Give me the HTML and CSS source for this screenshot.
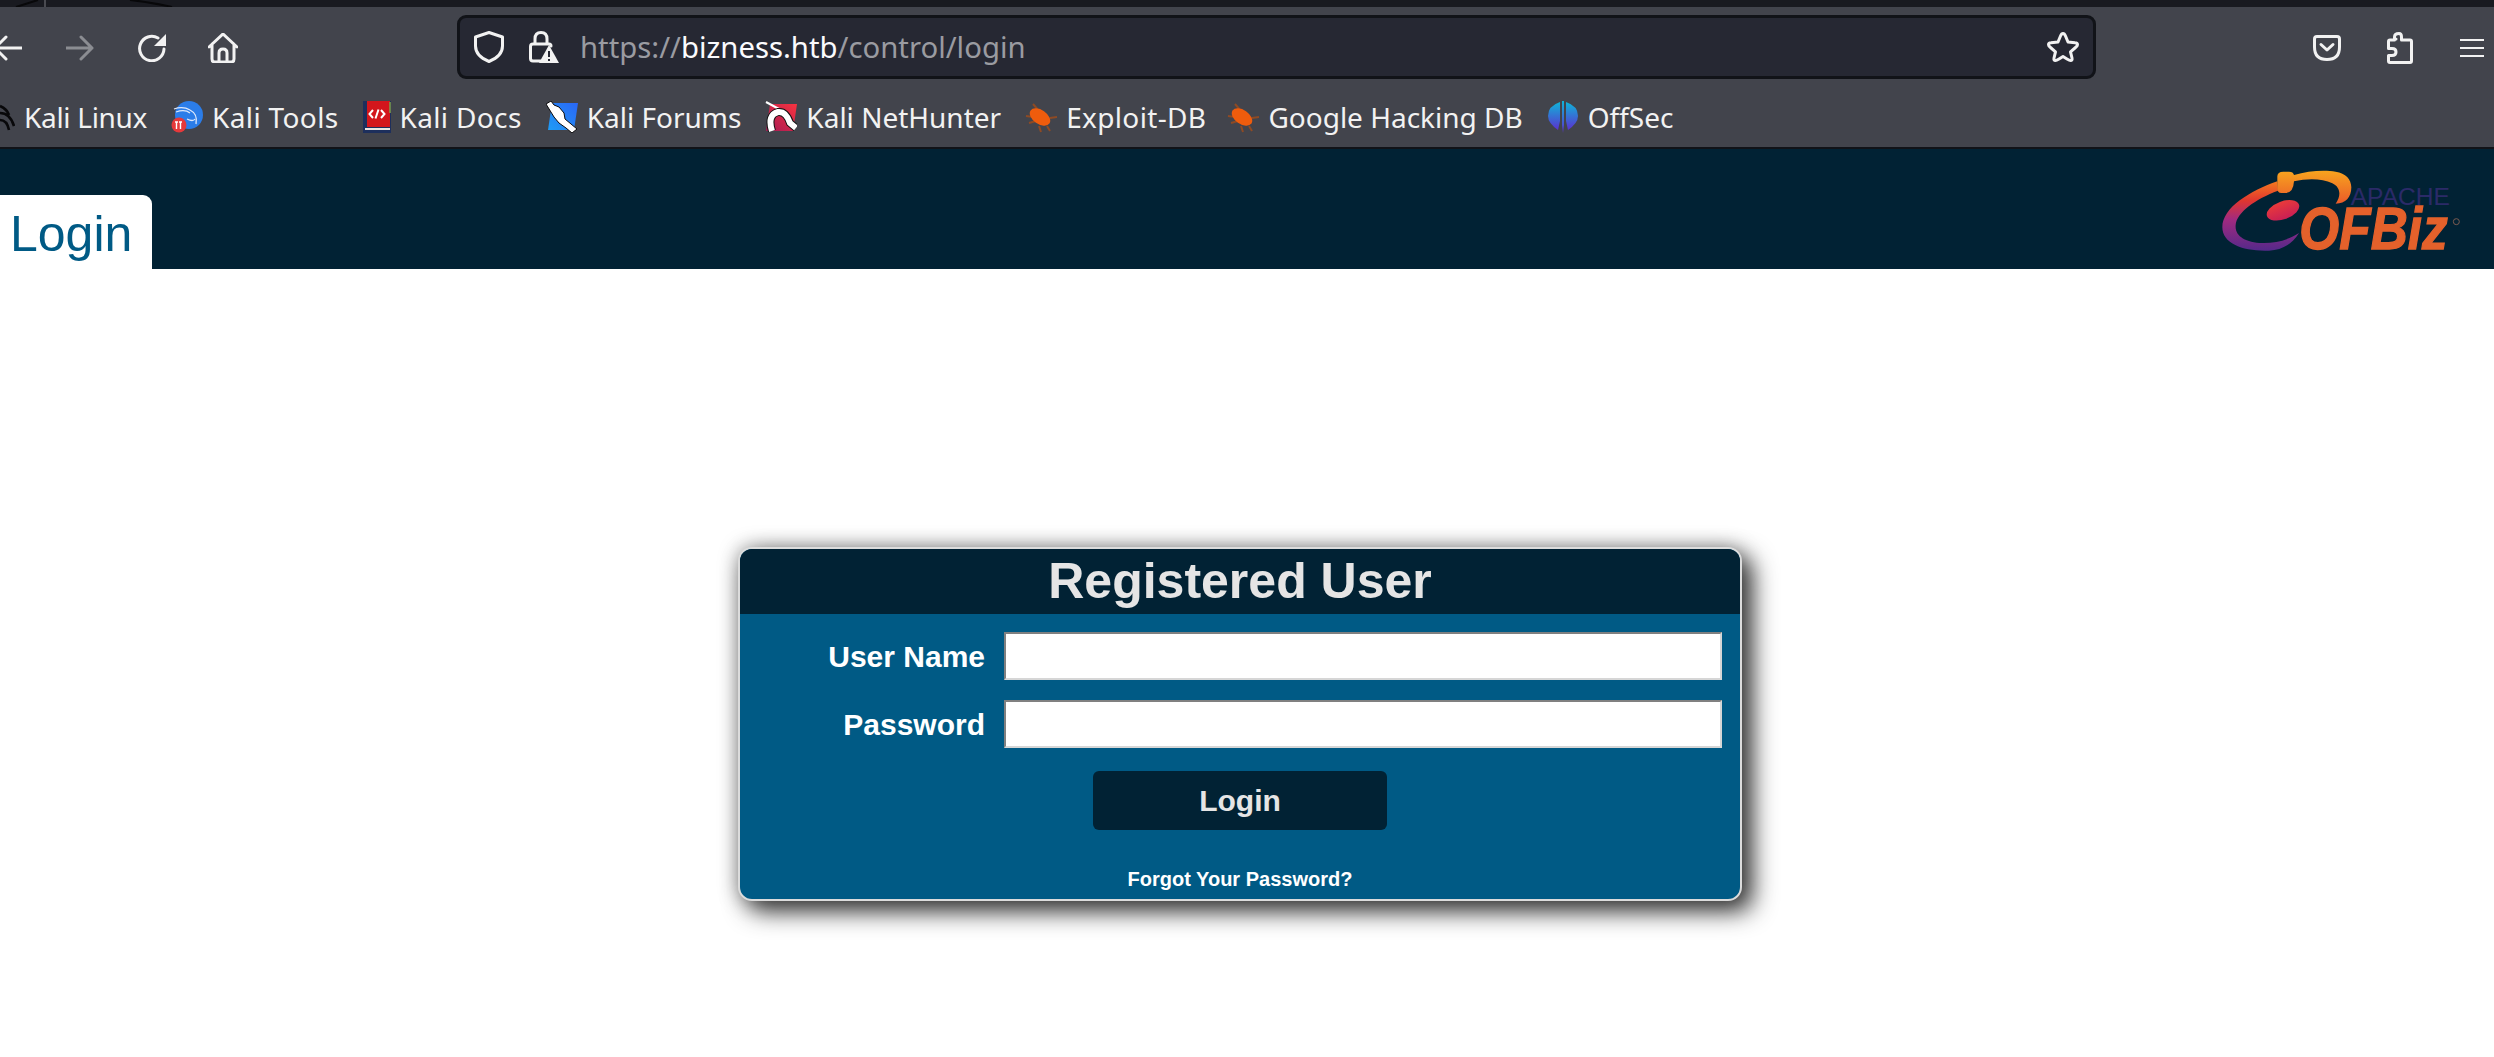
FILE: index.html
```html
<!DOCTYPE html>
<html lang="en">
<head>
<meta charset="utf-8">
<title>OFBiz: Login</title>
<link rel="stylesheet" href="styles.css">
</head>
<body>
<div class="desktop-strip">
  <svg class="strip-art" width="300" height="7" viewBox="0 0 300 7"><path d="M45 0V7" stroke="#5a5b60" stroke-width="1.500"/><path d="M16 7L38 0M130 0Q150 2 172 7" stroke="#08080a" stroke-width="2" fill="none"/></svg>
</div>
<header class="chrome">
  <div class="toolbar">
    <svg class="ic ic-back" width="22" height="30" viewBox="8 0 22 30"><path d="M32 15H3M14 4L3 15L14 26" class="st"/></svg>
    <svg class="ic ic-fwd" width="28" height="30" viewBox="0 0 28 30"><path d="M0 15H26M15 4L26 15L15 26" class="st dim"/></svg>
    <svg class="ic ic-reload" width="28" height="28" viewBox="0 0 28 28"><path d="M26 15A12.200 12.200 0 1 1 20 4" class="st"/><path d="M28 0V12H16Z" fill="#f2f2f2"/></svg>
    <svg class="ic ic-home" width="30" height="30" viewBox="0 0 30 30"><path d="M1 14L15 1L29 14M4 11V26Q4 29 7 29H23Q26 29 26 26V11M11 29V20Q11 16 15 16Q19 16 19 20V29" class="st"/></svg>
    <div class="urlbar">
      <svg class="ic ic-shield" width="30" height="32" viewBox="0 0 30 32"><path d="M15 1.500L28.500 6V15Q28.500 25 15 30.500Q1.500 25 1.500 15V6Z" class="st"/></svg>
      <svg class="ic ic-lock" width="30" height="32" viewBox="0 0 30 32"><path d="M6 13V8Q6 1.500 12 1.500Q18 1.500 18 8V13M12 30H4Q1.500 30 1.500 27.500V15.500Q1.500 13 4 13H20Q22 13 22 15" class="st"/><path d="M20 14L30 32H10Z" fill="#f2f2f2"/><path d="M20 20V26M20 28V30" stroke="#262833" stroke-width="2"/></svg>
      <div class="url"><span class="url-dim">https://</span><span class="url-host">bizness.htb</span><span class="url-dim">/control/login</span></div>
      <svg class="ic ic-star" width="32" height="30" viewBox="0 0 32 30"><path d="M16 1.500Q17.500 1.500 18.500 4L21 10L28 10.800Q30.500 11 30.500 12.800Q30.500 14 28.500 15.500L23.500 19.800L25 26Q25.500 28.500 23.500 28.500Q22.500 28.500 20 27L16 24.500L12 27Q9.500 28.500 8.500 28.500Q6.500 28.500 7 26L8.500 19.800L3.500 15.500Q1.500 14 1.500 12.800Q1.500 11 4 10.800L11 10L13.500 4Q14.500 1.500 16 1.500Z" class="st"/></svg>
    </div>
    <svg class="ic ic-pocket" width="28" height="26" viewBox="0 0 28 26"><path d="M4 1.500H24Q26.500 1.500 26.500 4V12Q26.500 24.500 14 24.500Q1.500 24.500 1.500 12V4Q1.500 1.500 4 1.500Z" class="st"/><path d="M8 9.500L14 15L20 9.500" class="st"/></svg>
    <svg class="ic ic-puzzle" width="26" height="32" viewBox="0 0 26 32"><path d="M9 7H7.500V5Q7.500 1.500 12 1.500Q14.500 1.500 14.500 5V8H23Q24.500 8 24.500 9.500V29Q24.500 30.500 23 30.500H3Q1.500 30.500 1.500 29V23.500H5Q9 23.500 9 20Q9 16.500 5 16.500H1.500V9.500Q1.500 8 3 8H7.500" class="st"/></svg>
    <div class="burger"><i></i><i></i><i></i></div>
  </div>
  <nav class="bookmarks">
    <a class="bm bm-linux">
      <svg width="15" height="32" viewBox="0 0 15 32"><path d="M0 5Q7 8 9 14M0 12Q10 12 14 25M0 19Q7 19 9 29" stroke="#08080a" stroke-width="2.600" fill="none"/></svg>
      <span>Kali Linux</span>
    </a>
    <a class="bm bm-wide">
      <svg width="32" height="32" viewBox="0 0 32 32"><circle cx="18" cy="14" r="14" fill="#2b7de9"/><path d="M3 8Q12 5 19 9Q27 13 25 23M5 11Q14 8 19 12M16 18Q22 21 24 18" stroke="#dfe9fb" stroke-width="1.300" fill="none"/><circle cx="8" cy="24" r="7.500" fill="#e5393b"/><path d="M5.500 21V28M9.500 21V28M4 21H7M8 21H11" stroke="#fff" stroke-width="1.400"/></svg>
      <span>Kali Tools</span>
    </a>
    <a class="bm bm-wide">
      <svg width="28" height="32" viewBox="0 0 28 32"><rect x="0" width="28" height="32" fill="#1d2f5c"/><rect x="4" width="23" height="26" fill="#d3161c"/><path d="M27 1V12" stroke="#7fa04a" stroke-width="1.500"/><rect x="2" y="27" width="25" height="2" fill="#e9e4e0"/><path d="M10 9L6.500 13L10 17M18 9L21.500 13L18 17M15.500 8.500L12.500 17.500" stroke="#fff" stroke-width="2" fill="none"/></svg>
      <span>Kali Docs</span>
    </a>
    <a class="bm">
      <svg width="32" height="32" viewBox="0 0 32 32"><defs><linearGradient id="forum" x1="1" y1="0" x2="0" y2="1"><stop offset="0" stop-color="#2a66f5"/><stop offset="1" stop-color="#1f9cf5"/></linearGradient></defs><path d="M6 2H32L28 29H2Z" fill="url(#forum)"/><path d="M0 3L5 0L8 4L13 6L18 12L19 18L31 28L26 32L20 27L13 22L8 16Z" fill="#fff" stroke="#0b0b0d" stroke-width="1"/></svg>
      <span>Kali Forums</span>
    </a>
    <a class="bm">
      <svg width="32" height="32" viewBox="0 0 32 32"><defs><linearGradient id="hunter" x1="1" y1="0" x2="0" y2="1"><stop offset="0" stop-color="#f8333f"/><stop offset="1" stop-color="#a51a55"/></linearGradient></defs><path d="M5 3H32L28 30H1Z" fill="url(#hunter)"/><path d="M1 1L14 8" stroke="#fff" stroke-width="2"/><path d="M7 30Q2 14 13 11Q21 10 25 22L31 27" fill="none" stroke="#111" stroke-width="8"/><path d="M7 30Q2 14 13 11Q21 10 25 22L31 27" fill="none" stroke="#fff" stroke-width="6"/></svg>
      <span>Kali NetHunter</span>
    </a>
    <a class="bm bm-wide bm-exploit">
      <svg width="32" height="32" viewBox="0 0 32 32"><use href="#bug"/></svg>
      <span>Exploit-DB</span>
    </a>
    <a class="bm">
      <svg width="32" height="32" viewBox="0 0 32 32"><use href="#bug"/></svg>
      <span>Google Hacking DB</span>
    </a>
    <a class="bm">
      <svg width="32" height="32" viewBox="0 0 32 32"><defs><linearGradient id="off" x1="0" y1="0" x2="0" y2="1"><stop offset="0" stop-color="#0fb4d8"/><stop offset="1" stop-color="#5b30d0"/></linearGradient></defs><path d="M13 1Q1 5 1 15Q1 22 11 29L13 20Z" fill="url(#off)"/><path d="M19 1Q31 5 31 15Q31 22 21 29L19 20Z" fill="url(#off)"/><path d="M15 0H17V24L16 32L15 24Z" fill="url(#off)"/></svg>
      <span>OffSec</span>
    </a>
  </nav>
</header>
<svg class="defs" width="0" height="0"><defs><g id="bug"><path d="M8 3L14 10M1 15L8 16M4 22L11 20M14 25L16 31M22 25L25 30M25 17L32 16" stroke="#8e4a24" stroke-width="2"/><ellipse cx="15" cy="16" rx="11.500" ry="7" transform="rotate(35 15 16)" fill="#ee5c0d"/></g></defs></svg>

<div class="app-header">
  <div class="tab">Login</div>
  <svg class="logo" width="300" height="120" viewBox="0 0 900 360">
    <defs>
      <linearGradient id="swoosh" x1="0" y1="0" x2="0" y2="1">
        <stop offset="0" stop-color="#f4791f"/>
        <stop offset=".28" stop-color="#e0362f"/>
        <stop offset=".55" stop-color="#a12a80"/>
        <stop offset="1" stop-color="#55298a"/>
      </linearGradient>
      <linearGradient id="arc" x1="0" y1="0" x2="0" y2="1">
        <stop offset="0" stop-color="#f8a41e"/>
        <stop offset="1" stop-color="#ea5a2a"/>
      </linearGradient>
      <linearGradient id="dot" x1="0" y1="0" x2="0" y2="1">
        <stop offset="0" stop-color="#ea3a3a"/>
        <stop offset="1" stop-color="#c81f55"/>
      </linearGradient>
    </defs>
    <path d="M250 97C170 125 85 175 85 235C85 285 150 308 225 305C265 303 295 285 315 252C285 272 245 283 205 282C155 280 122 262 125 228C128 190 185 150 252 125Z" fill="url(#swoosh)"/>
    <path d="M250 82Q250 68 268 68H285Q298 68 300 78C340 66 390 62 425 68C455 73 472 90 472 115C472 145 455 164 425 164C442 140 440 115 415 103C385 88 340 88 300 97Q298 132 275 132H262Q250 132 250 118Z" fill="url(#arc)"/>
    <ellipse cx="267" cy="184" rx="51" ry="27" transform="rotate(-20 267 184)" fill="url(#dot)"/>
    <text class="logo-apache" x="470" y="167" textLength="298" lengthAdjust="spacingAndGlyphs">APACHE</text>
    <text class="logo-ofbiz" x="316" y="300" textLength="445" lengthAdjust="spacingAndGlyphs">OFBiz</text>
    <circle cx="787" cy="218" r="9" fill="none" stroke="#7a5a50" stroke-width="3"/>
  </svg>
</div>

<main class="stage">
  <form class="login-card">
    <h1 class="card-title">Registered User</h1>
    <div class="card-body">
      <div class="field">
        <label class="field-label">User Name</label>
        <input class="field-input" type="text">
      </div>
      <div class="field">
        <label class="field-label">Password</label>
        <input class="field-input" type="password">
      </div>
      <button class="submit" type="button">Login</button>
      <a class="forgot">Forgot Your Password?</a>
    </div>
  </form>
</main>
</body>
</html>
```

FILE: styles.css
```css
* { box-sizing: border-box; }
html, body { margin: 0; padding: 0; }
body {
  width: 2494px;
  height: 1057px;
  overflow: hidden;
  background: #fff;
  font-family: "Liberation Sans", Arial, sans-serif;
}
.desktop-strip { height: 7px; background: #191a20; }
.strip-art { display: block; }
.defs { position: absolute; }

.chrome {
  height: 142px;
  background: #42444c;
  border-bottom: 2px solid #111318;
  font-family: "Noto Sans", sans-serif;
  color: #f2f2f2;
}
.toolbar { height: 79px; display: flex; align-items: center; padding-top: 3px; }
.ic { display: block; flex: none; }
.st { fill: none; stroke: #f2f2f2; stroke-width: 3; stroke-linecap: round; stroke-linejoin: round; }
.st.dim { stroke: #8b8d92; }
.ic-back { margin-right: 44px; }
.ic-fwd { margin-right: 44px; }
.ic-reload { margin-right: 42px; }
.ic-home { margin-right: 219px; }

.urlbar {
  width: 1639px;
  height: 64px;
  margin-top: -2px;
  display: flex;
  align-items: center;
  background: #262833;
  border: 3px solid #111318;
  border-radius: 9px;
  padding: 0 14px 0 14px;
}
.ic-shield { margin-right: 25px; }
.ic-lock { margin-right: 21px; }
.url { flex: 1; font-size: 29.300px; white-space: nowrap; }
.url-dim { color: #9a9ba1; }
.url-host { color: #fbfbfe; }

.ic-pocket { margin-left: 217px; margin-right: 46px; }
.ic-puzzle { margin-right: 47px; }
.burger { width: 24px; display: flex; flex-direction: column; gap: 6px; }
.burger i { display: block; height: 2px; background: #f2f2f2; }

.bookmarks { height: 61px; display: flex; align-items: center; }
.bm { display: flex; align-items: center; gap: 9px; margin-right: 24px; font-size: 28px; white-space: nowrap; }
.bm svg { display: block; flex: none; }
.bm-linux { letter-spacing: -.3px; }
.bm-wide { letter-spacing: .35px; }
.bm-exploit { margin-right: 21px; }

.app-header {
  height: 120px;
  background: #012234;
  display: flex;
  justify-content: space-between;
  align-items: flex-end;
}
.tab {
  width: 152px;
  height: 74px;
  padding-left: 10px;
  background: #fff;
  border-top-right-radius: 9px;
  color: #005a85;
  font-size: 50px;
  line-height: 78px;
}
.logo { display: block; }
.logo-apache { font: 400 74px "Liberation Sans", Arial, sans-serif; fill: #2b2a68; }
.logo-ofbiz { font: italic 700 175px "Liberation Sans", Arial, sans-serif; fill: #e4612b; stroke: #e4612b; stroke-width: 4px; }

.stage { padding: 278px 0 0 738px; }
.login-card {
  width: 1004px;
  height: 354px;
  border: 2px solid #dcdcdc;
  border-radius: 14px;
  overflow: hidden;
  background: #005a85;
  box-shadow: 10px 10px 25px #333, 0 0 20px rgba(0, 0, 0, .35);
}
.card-title {
  margin: 0;
  height: 65px;
  background: #012234;
  color: #e5e5e5;
  font-size: 50px;
  font-weight: 700;
  line-height: 65px;
  text-align: center;
}
.card-body { display: flex; flex-direction: column; align-items: center; padding-top: 18px; }
.field { width: 100%; height: 48px; margin-bottom: 20px; display: flex; align-items: center; }
.field-label {
  width: 245px;
  margin-right: 19px;
  padding-top: 1px;
  color: #fff;
  font-size: 30px;
  font-weight: 700;
  text-align: right;
}
.field-input {
  width: 718px;
  height: 48px;
  padding: 0;
  background: #fff;
  border: 2px solid;
  border-color: #808080 #d6d6d6 #d6d6d6 #808080;
  outline: none;
}
.submit {
  width: 294px;
  height: 59px;
  margin-top: 3px;
  border: 0;
  border-radius: 6px;
  background: #012234;
  color: #e5e5e5;
  font: 700 30px "Liberation Sans", Arial, sans-serif;
}
.forgot { margin-top: 37px; color: #fff; font-size: 20px; font-weight: 700; line-height: 24px; }
```
